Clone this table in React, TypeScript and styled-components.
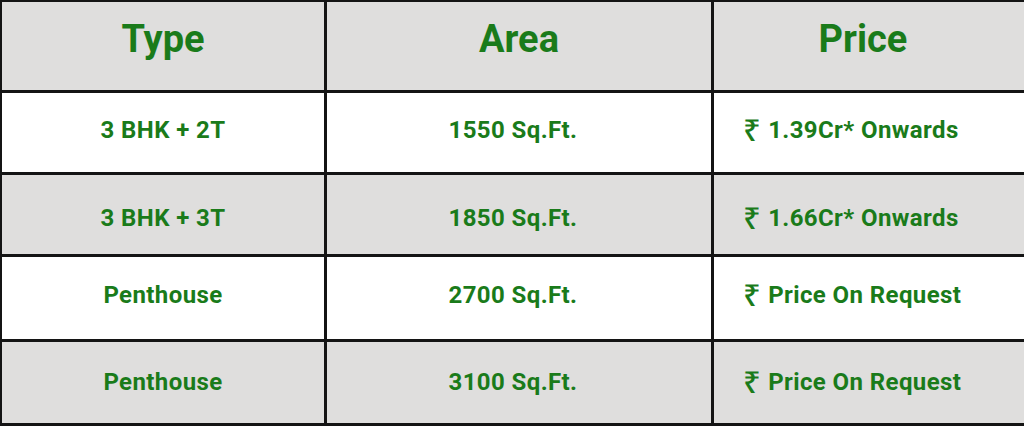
import React from "react";
import styled, { createGlobalStyle } from "styled-components";

const GlobalStyle = createGlobalStyle`
  html, body {
    margin: 0;
    padding: 0;
    background: #ffffff;
    overflow: hidden;
  }
  body {
    font-family: Roboto, "Liberation Sans", Arial, sans-serif;
  }
`;

const Table = styled.div`
  display: grid;
  grid-template-columns: 322px 384px 1fr;
  grid-template-rows: 88px 79px 79px 82px 81px;
  gap: 3px;
  width: 1024px;
  height: 426px;
  box-sizing: border-box;
  padding: 2px 0 0 2px;
  background: #141414;
`;

const Cell = styled.div<{ $shade?: boolean; $shift?: number; $align?: "left" | "center" }>`
  display: flex;
  align-items: center;
  justify-content: ${(p) => (p.$align === "left" ? "flex-start" : "center")};
  padding-left: ${(p) => (p.$align === "left" ? "29px" : "0")};
  background: ${(p) => (p.$shade ? "#dfdedd" : "#ffffff")};
  color: #1a7b1a;
  font-weight: 700;
  font-size: 24px;
  letter-spacing: 0.4px;
  box-sizing: border-box;
  padding-top: ${(p) => ((p.$shift ?? 0) > 0 ? p.$shift! * 2 : 0)}px;
  padding-bottom: ${(p) => ((p.$shift ?? 0) < 0 ? -p.$shift! * 2 : 0)}px;
  white-space: nowrap;
`;

const HeadCell = styled(Cell)`
  font-size: 38px;
  letter-spacing: 0;
  padding-bottom: 14px;
`;

const Rupee = styled.span`
  font-family: "Noto Sans", "DejaVu Sans", sans-serif;
  font-weight: 500;
  font-size: 31px;
  margin-right: 7px;
  position: relative;
  top: -1px;
`;

const rows = [
  { type: "3 BHK + 2T", area: "1550 Sq.Ft.", price: "1.39Cr* Onwards", shade: false, shift: -3 },
  { type: "3 BHK + 3T", area: "1850 Sq.Ft.", price: "1.66Cr* Onwards", shade: true, shift: 3 },
  { type: "Penthouse", area: "2700 Sq.Ft.", price: "Price On Request", shade: false, shift: -3 },
  { type: "Penthouse", area: "3100 Sq.Ft.", price: "Price On Request", shade: true, shift: -1 },
];

export default function App() {
  return (
    <>
      <GlobalStyle />
      <Table>
        <HeadCell $shade>Type</HeadCell>
        <HeadCell $shade>Area</HeadCell>
        <HeadCell $shade style={{ paddingRight: 12 }}>Price</HeadCell>
        {rows.map((r, i) => (
          <React.Fragment key={i}>
            <Cell $shade={r.shade} $shift={r.shift}>{r.type}</Cell>
            <Cell $shade={r.shade} $shift={r.shift} style={{ paddingRight: 12 }}>{r.area}</Cell>
            <Cell $shade={r.shade} $shift={r.shift} $align="left">
              <Rupee>₹</Rupee>
              {r.price}
            </Cell>
          </React.Fragment>
        ))}
      </Table>
    </>
  );
}
